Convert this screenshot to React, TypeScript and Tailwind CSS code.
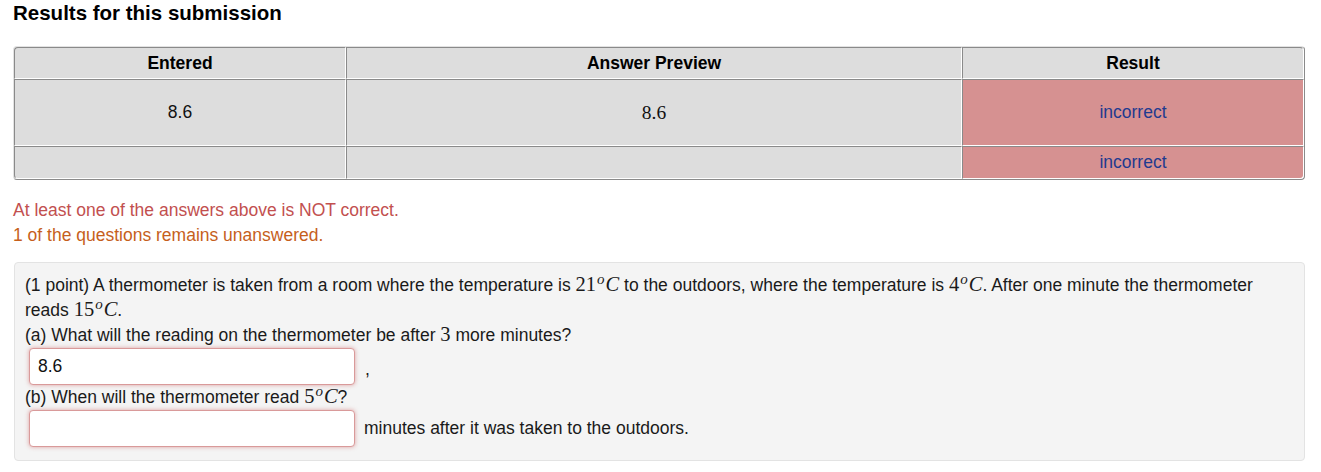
const sans = { fontFamily: '"Liberation Sans", Arial, sans-serif' };

const M = ({ num, deg = true }: { num: string; deg?: boolean }) => (
  <span className="font-['Liberation_Serif',serif] text-[20.5px] leading-none">
    {num}
    {deg && (
      <>
        <span className="relative -top-[7px] ml-px text-[15px] italic">o</span>
        <span className="ml-px italic">C</span>
      </>
    )}
  </span>
);

const cell =
  "border-t border-l border-t-[#8a8a8a] border-l-[#8a8a8a] border-b border-r border-b-white border-r-white text-center align-middle";

export default function App() {
  return (
    <div
      className="min-h-[472px] bg-white pl-[13px] pr-[16px] text-[17.5px] text-[#111]"
      style={sans}
    >
      <h3 className="pt-[1px] text-[20.5px] font-bold leading-[24px] text-black">
        Results for this submission
      </h3>

      <table className="mt-[21px] w-[1292px] border-separate border-spacing-0 rounded-[4px] border border-t-[#e2e2e2] border-l-[#e2e2e2] border-b-[#8a8a8a] border-r-[#8a8a8a] bg-[#dddddd]">
        <thead>
          <tr className="h-[32px]">
            <th className={`${cell} w-[332px] rounded-tl-[4px] font-bold text-black`}>Entered</th>
            <th className={`${cell} w-[616px] font-bold text-black`}>Answer Preview</th>
            <th className={`${cell} rounded-tr-[4px] font-bold text-black`}>Result</th>
          </tr>
        </thead>
        <tbody>
          <tr className="h-[67px]">
            <td className={cell}>8.6</td>
            <td className={cell}>
              <span className="font-['Liberation_Serif',serif] text-[19.5px]">8.6</span>
            </td>
            <td className={`${cell} bg-[#d69191] text-[#1f3a8f]`}>incorrect</td>
          </tr>
          <tr className="h-[33px]">
            <td className={`${cell} rounded-bl-[4px]`}></td>
            <td className={cell}></td>
            <td className={`${cell} rounded-br-[4px] bg-[#d69191] text-[#1f3a8f]`}>incorrect</td>
          </tr>
        </tbody>
      </table>

      <div className="mt-[18px] leading-[25px]">
        <div className="text-[#c2504f]">At least one of the answers above is NOT correct.</div>
        <div className="text-[#c65f1c]">1 of the questions remains unanswered.</div>
      </div>

      <div className="ml-px mt-[14px] rounded-[4px] border border-[#e3e3e3] bg-[#f4f4f4] pl-[10px] pr-[10px] pt-[10px] pb-[13px] leading-[25px] text-[#1a1a1a]">
        <div>
          (1 point) A thermometer is taken from a room where the temperature is <M num="21" /> to the
          outdoors, where the temperature is <M num="4" />. After one minute the thermometer
        </div>
        <div>
          reads <M num="15" />.
        </div>
        <div>
          (a) What will the reading on the thermometer be after <M num="3" deg={false} /> more minutes?
        </div>
        <div className="flex items-center">
          <input
            defaultValue="8.6"
            className="ml-[4px] h-[37px] w-[326px] rounded-[4px] border border-[#d99a9a] bg-white px-[8px] text-[17.5px] text-[#111] shadow-[0_0_4px_rgba(200,80,80,0.5)] outline-none"
            style={sans}
          />
          <span className="ml-[10px] mt-[6px]">,</span>
        </div>
        <div>
          (b) When will the thermometer read <M num="5" />?
        </div>
        <div className="flex items-center">
          <input
            className="ml-[4px] h-[37px] w-[326px] rounded-[4px] border border-[#d99a9a] bg-white px-[8px] text-[17.5px] shadow-[0_0_4px_rgba(200,80,80,0.5)] outline-none"
            style={sans}
          />
          <span className="ml-[9px]">minutes after it was taken to the outdoors.</span>
        </div>
      </div>
    </div>
  );
}
